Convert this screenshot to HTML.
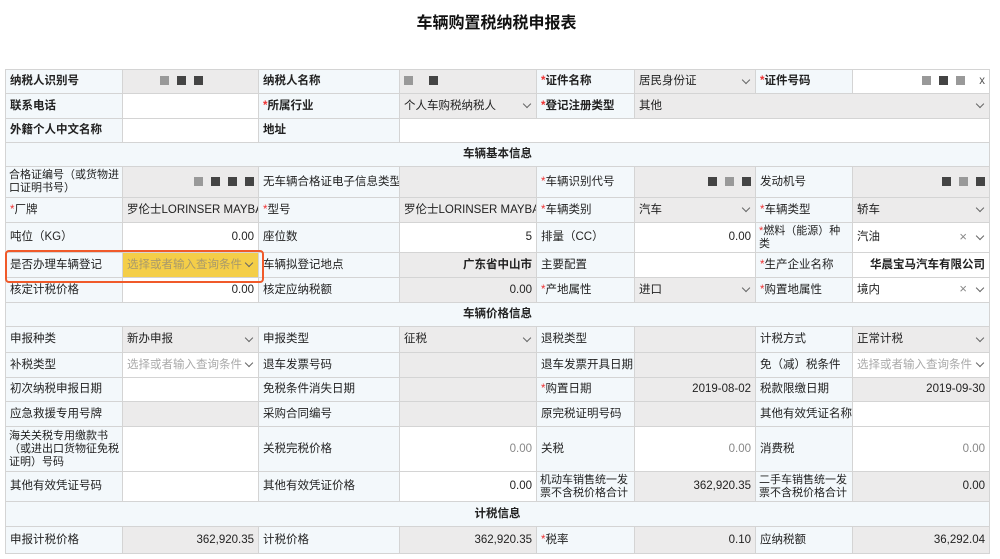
<!DOCTYPE html>
<html><head><meta charset="utf-8"><style>
body{margin:0;width:1000px;height:559px;overflow:hidden;background:#fff;font-family:"Liberation Sans","Noto Sans CJK SC",sans-serif;color:#222;position:relative}
h1{position:absolute;left:0;width:993px;top:9px;margin:0;text-align:center;font-size:16px;font-weight:bold;color:#111;font-family:"Liberation Sans","Noto Sans CJK SC",sans-serif}
table{position:absolute;left:5px;top:69px;border-collapse:collapse;table-layout:fixed;width:984px;font-size:11.5px}
td{border:1px solid #d4d4d4;padding:0 4px;line-height:13px;overflow:hidden;white-space:nowrap;position:relative;box-sizing:border-box}
td.l{background:#f3f8fb}
td.g{background:#ecebeb}
td.w{background:#fff}
td.wr{white-space:normal;font-size:11px;padding:0 2px 0 3px;line-height:13px;word-break:break-all}
.r{text-align:right}
.s{color:#e33}
.b{font-weight:bold}
.sec{background:#f3f8fb;text-align:center;font-weight:bold}
.ph{color:#aaa}
.dd{position:absolute;right:6px;top:50%;margin-top:-5px;width:5px;height:5px;border-right:1.3px solid #666;border-bottom:1.3px solid #666;transform:rotate(45deg)}
.x{position:absolute;right:22px;top:50%;margin-top:-8px;color:#888;font-size:13px}
.bl{display:inline-block;width:9px;height:9px;background:#444;margin-left:8px;vertical-align:middle}
.bl2{background:#999}
.yl{background:#f4ce48 !important}
.box{position:absolute;left:5px;top:250px;width:255px;height:29px;border:2px solid #f05a2a;border-radius:4px}
</style></head><body>
<h1>车辆购置税纳税申报表</h1>
<table>
<colgroup><col style="width:117px"><col style="width:136px"><col style="width:141px"><col style="width:137px"><col style="width:98px"><col style="width:121px"><col style="width:97px"><col style="width:137px"></colgroup>
<tr style="height:24px"><td class="l b">纳税人识别号</td><td class="g"><span style="margin-left:25px"></span><span class="bl bl2"></span><span class="bl"></span><span class="bl"></span></td><td class="l b">纳税人名称</td><td class="g"><span class="bl bl2" style="margin-left:0"></span><span class="bl" style="margin-left:16px"></span></td><td class="l b"><span class="s">*</span>证件名称</td><td class="g">居民身份证<span class="dd"></span></td><td class="l b"><span class="s">*</span>证件号码</td><td class="w r"><span class="bl bl2"></span><span class="bl"></span><span class="bl bl2"></span><span style="margin-left:14px;color:#555">x</span></td></tr>
<tr style="height:25px"><td class="l b">联系电话</td><td class="w"></td><td class="l b"><span class="s">*</span>所属行业</td><td class="g">个人车购税纳税人<span class="dd"></span></td><td class="l b"><span class="s">*</span>登记注册类型</td><td class="g" colspan="3">其他<span class="dd"></span></td></tr>
<tr style="height:24px"><td class="l b">外籍个人中文名称</td><td class="w"></td><td class="l b">地址</td><td class="w" colspan="5"></td></tr>
<tr style="height:24px"><td class="sec" colspan="8">车辆基本信息</td></tr>
<tr style="height:31px"><td class="l wr">合格证编号（或货物进口证明书号）</td><td class="g r"><span class="bl bl2"></span><span class="bl"></span><span class="bl"></span><span class="bl"></span></td><td class="l">无车辆合格证电子信息类型</td><td class="g"></td><td class="l"><span class="s">*</span>车辆识别代号</td><td class="g r"><span class="bl"></span><span class="bl bl2"></span><span class="bl"></span></td><td class="l">发动机号</td><td class="g r"><span class="bl"></span><span class="bl bl2"></span><span class="bl"></span></td></tr>
<tr style="height:25px"><td class="l"><span class="s">*</span>厂牌</td><td class="g">罗伦士LORINSER MAYBACH</td><td class="l"><span class="s">*</span>型号</td><td class="g">罗伦士LORINSER MAYBACH</td><td class="l"><span class="s">*</span>车辆类别</td><td class="g">汽车<span class="dd"></span></td><td class="l"><span class="s">*</span>车辆类型</td><td class="g">轿车<span class="dd"></span></td></tr>
<tr style="height:30px"><td class="l">吨位（KG）</td><td class="w r">0.00</td><td class="l">座位数</td><td class="w r">5</td><td class="l">排量（CC）</td><td class="w r">0.00</td><td class="l wr"><span class="s">*</span>燃料（能源）种类</td><td class="w">汽油<span class="x">×</span><span class="dd"></span></td></tr>
<tr style="height:25px"><td class="l">是否办理车辆登记</td><td class="yl"><span class="ph" style="color:#a99a6a">选择或者输入查询条件</span><span class="dd"></span></td><td class="l">车辆拟登记地点</td><td class="g r b">广东省中山市</td><td class="l">主要配置</td><td class="w"></td><td class="l"><span class="s">*</span>生产企业名称</td><td class="w r b">华晨宝马汽车有限公司</td></tr>
<tr style="height:25px"><td class="l">核定计税价格</td><td class="w r">0.00</td><td class="l">核定应纳税额</td><td class="g r">0.00</td><td class="l"><span class="s">*</span>产地属性</td><td class="g">进口<span class="dd"></span></td><td class="l"><span class="s">*</span>购置地属性</td><td class="w">境内<span class="x">×</span><span class="dd"></span></td></tr>
<tr style="height:24px"><td class="sec" colspan="8">车辆价格信息</td></tr>
<tr style="height:26px"><td class="l">申报种类</td><td class="g">新办申报<span class="dd"></span></td><td class="l">申报类型</td><td class="g">征税<span class="dd"></span></td><td class="l">退税类型</td><td class="g"></td><td class="l">计税方式</td><td class="g">正常计税<span class="dd"></span></td></tr>
<tr style="height:25px"><td class="l">补税类型</td><td class="w"><span class="ph">选择或者输入查询条件</span><span class="dd"></span></td><td class="l">退车发票号码</td><td class="g"></td><td class="l">退车发票开具日期</td><td class="g"></td><td class="l">免（减）税条件</td><td class="w"><span class="ph">选择或者输入查询条件</span><span class="dd"></span></td></tr>
<tr style="height:24px"><td class="l">初次纳税申报日期</td><td class="w"></td><td class="l">免税条件消失日期</td><td class="g"></td><td class="l"><span class="s">*</span>购置日期</td><td class="g r">2019-08-02</td><td class="l">税款限缴日期</td><td class="g r">2019-09-30</td></tr>
<tr style="height:25px"><td class="l">应急救援专用号牌</td><td class="g"></td><td class="l">采购合同编号</td><td class="g"></td><td class="l">原完税证明号码</td><td class="g"></td><td class="l">其他有效凭证名称</td><td class="w"></td></tr>
<tr style="height:45px"><td class="l wr">海关关税专用缴款书（或进出口货物征免税证明）号码</td><td class="w"></td><td class="l">关税完税价格</td><td class="w r" style="color:#888">0.00</td><td class="l">关税</td><td class="w r" style="color:#888">0.00</td><td class="l">消费税</td><td class="w r" style="color:#888">0.00</td></tr>
<tr style="height:30px"><td class="l">其他有效凭证号码</td><td class="w"></td><td class="l">其他有效凭证价格</td><td class="w r">0.00</td><td class="l wr">机动车销售统一发票不含税价格合计</td><td class="g r">362,920.35</td><td class="l wr">二手车销售统一发票不含税价格合计</td><td class="g r">0.00</td></tr>
<tr style="height:25px"><td class="sec" colspan="8">计税信息</td></tr>
<tr style="height:27px"><td class="l">申报计税价格</td><td class="g r">362,920.35</td><td class="l">计税价格</td><td class="g r">362,920.35</td><td class="l"><span class="s">*</span>税率</td><td class="g r">0.10</td><td class="l">应纳税额</td><td class="g r">36,292.04</td></tr>
</table>
<div class="box"></div>
</body></html>
